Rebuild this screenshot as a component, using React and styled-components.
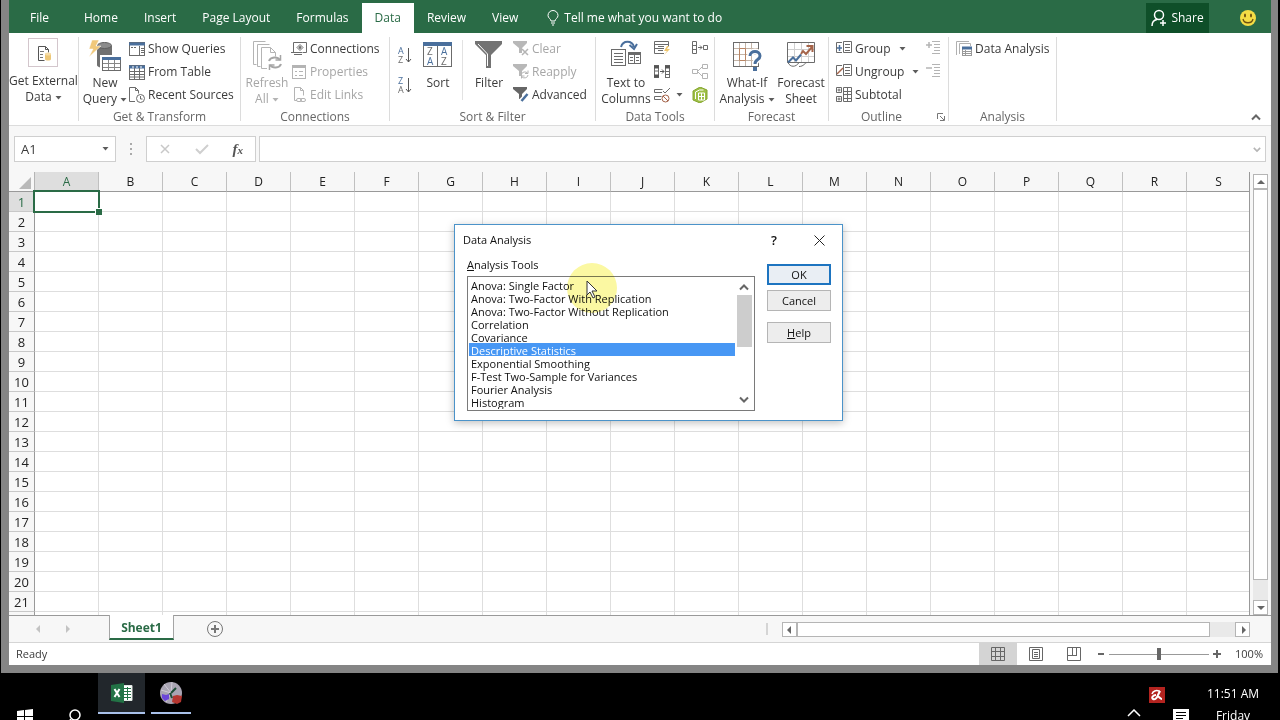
import React, { useState } from 'react';
import styled, { createGlobalStyle } from 'styled-components';

const COLUMNS = 'ABCDEFGHIJKLMNOPQRS'.split('')
const ROWS = Array.from({ length: 22 }, (_, i) => i + 1)
const TABS = ['Home', 'Insert', 'Page Layout', 'Formulas', 'Data', 'Review', 'View']
const TOOLS = [
    'Anova: Single Factor',
    'Anova: Two-Factor With Replication',
    'Anova: Two-Factor Without Replication',
    'Correlation',
    'Covariance',
    'Descriptive Statistics',
    'Exponential Smoothing',
    'F-Test Two-Sample for Variances',
    'Fourier Analysis',
    'Histogram',
]

const GRAY = '#6b6b6b'
const BLUE = '#4a6f9c'

// ICONS

function Icon({ w = 16, h = 16, children, dim }) {
    return (
        <svg width={w} height={h} viewBox={`0 0 ${w} ${h}`} fill="none" stroke={dim ? '#b4b4b4' : GRAY} aria-hidden="true">
            {children}
        </svg>
    )
}

const Caret = ({ color = '#5c5c5c' }) => <svg width="7" height="4" viewBox="0 0 7 4" aria-hidden="true"><path d="M0.5 0h6l-3 3.5z" fill={color} /></svg>

const ExternalIcon = () => (
    <Icon w={30} h={29}>
        <rect x="0.5" y="0.5" width="29" height="28" stroke="#d3c6cc" fill="#fff" />
        <path d="M16.5 22.5h-6v-14h7l3 3v3M17.5 8.5v3h3" stroke="#555" />
        <path d="M12 13.5h4M12 16.5h3M12 19.5h3" stroke="#777" />
        <path d="M17 16v5c0 2 6 2 6 0v-5z" fill="#edc778" stroke="none" />
        <ellipse cx="20" cy="16" rx="3" ry="1.5" fill="#f6dca5" stroke="none" />
    </Icon>
)

const NewQueryIcon = () => (
    <Icon w={34} h={34}>
        <path d="M9 6v19c0 4 15 4 15 0V6z" fill="#707070" stroke="none" />
        <ellipse cx="16.5" cy="5.5" rx="7" ry="3" fill="#8c8c8c" stroke="#5f5f5f" />
        <path d="M4 0h7L8 6h5L1 17l4-8H1z" fill="#f0c87a" stroke="#fff" strokeWidth="0.5" />
        <rect x="13.5" y="16.5" width="20" height="15" fill="#fff" stroke="#fff" strokeWidth="3" />
        <rect x="14.5" y="17.5" width="18" height="13" fill="#fff" stroke={GRAY} />
        <path d="M14 18.5h19" stroke={BLUE} strokeWidth="3" />
        <path d="M15 23.5h17M15 27.5h17M20.5 20v10M26.5 20v10" stroke="#888" />
    </Icon>
)

const ShowQueriesIcon = () => (
    <Icon>
        <rect x="0.5" y="1.5" width="15" height="13" />
        <path d="M0 3h16" stroke={BLUE} strokeWidth="3" />
        <path d="M10.5 5v9M2 6.5h2M5 6.5h2M12 7.5h3M12 9.5h3M12 11.5h3" />
    </Icon>
)

const FromTableIcon = () => (
    <Icon>
        <rect x="0.5" y="1.5" width="15" height="14" />
        <path d="M0 3h16" stroke={BLUE} strokeWidth="3" />
        <path d="M1 7.5h14M1 10.5h14M1 13h14M5.5 4v11M10.5 4v11" />
        <path d="M3 3h2M7 3h2M11 3h2" stroke="#fff" />
    </Icon>
)

const RecentIcon = () => (
    <Icon>
        <path d="M6 14.5H0.5v-14h6l3 3v3M6.5 0.5v3h3" />
        <circle cx="11.5" cy="11.5" r="4" />
        <path d="M11.5 9v3h2" />
    </Icon>
)

const RefreshIcon = () => (
    <Icon w={30} h={32} dim>
        <path d="M4.5 24.5H1.5V1.5h12M8.5 26.5H5.5V4.5h12" />
        <path d="M15 28.5H9.5V7.5h9l5 5v4M18.5 7.5v5h5" />
        <path d="M17 21a6 5 0 0 1 11-1M29 24a6 5 0 0 1-11 1" strokeWidth="2" stroke="#a5a5a5" />
        <path d="M28.5 15v5h-5M17.5 30v-5h5" strokeWidth="1.5" stroke="#a5a5a5" />
    </Icon>
)

const ConnectionsIcon = () => (
    <Icon>
        <path d="M2.5 11.5v-10h13v10h-4M0 11.5h7" />
        <path d="M9 3.5l3 3-3 3-3-3z" />
        <circle cx="9" cy="6.5" r="1" fill={GRAY} />
        <path d="M3 13.5h8M7 11.5h4" />
    </Icon>
)

const PropertiesIcon = () => (
    <Icon dim>
        <rect x="1.5" y="1.5" width="13" height="13" />
        <path d="M1 3h14" strokeWidth="2" />
        <path d="M4 7.5h2M4 11.5h2M8 7.5h4M8 11.5h4" />
    </Icon>
)

const EditLinksIcon = () => (
    <Icon dim>
        <path d="M6 13.5H3.5v-13h6l3 3v5M9.5 0.5v3h3" />
        <rect x="5.5" y="11.5" width="5" height="3" rx="1.5" />
        <rect x="9.5" y="11.5" width="5" height="3" rx="1.5" />
    </Icon>
)

const SortSmall = ({ a, b }) => (
    <svg width="16" height="18" viewBox="0 0 16 18" overflow="visible" fontFamily="Open Sans, sans-serif" fontSize="9" aria-hidden="true">
        <text x="2" y="8" fill={BLUE}>{a}</text>
        <text x="2" y="17" fill={GRAY}>{b}</text>
        <path d="M12.5 2v14M10 13l2.5 3 2.5-3" fill="none" stroke="#555" />
    </svg>
)

const SortIcon = () => (
    <svg width="30" height="28" viewBox="0 -2 30 28" overflow="visible" fontFamily="Open Sans, sans-serif" fontSize="10" aria-hidden="true">
        <rect x="0.5" y="0.5" width="28" height="24" fill="#fff" stroke={GRAY} />
        <path d="M0 2h29" stroke={BLUE} strokeWidth="4" />
        <path d="M14.5 4v21" stroke={GRAY} />
        <text x="4" y="13" fill={GRAY}>Z</text>
        <text x="4" y="23" fill={BLUE}>A</text>
        <text x="18" y="13" fill={BLUE}>A</text>
        <text x="18" y="23" fill={GRAY}>Z</text>
    </svg>
)

const FilterIcon = () => (
    <Icon w={28} h={30}>
        <path d="M0 1h27v3L16 15v13h-5V15L0 4z" fill="#737373" stroke="none" />
        <path d="M3 4l9.5 10v12" stroke="#fff" />
    </Icon>
)

const SmallFilter = ({ kind, dim }) => (
    <Icon dim={dim}>
        <path d="M0 0h14v2L9 7v5H6V7L0 2z" fill={dim ? '#b8b8b8' : '#666'} stroke="none" />
        {kind === 'clear' && <path d="M9 8l6 6M15 8l-6 6" strokeWidth="1.5" />}
        {kind === 'reapply' && <path d="M8.5 10a3.5 3 0 0 1 6-1M15 11a3.5 3 0 0 1-6 2M15 6.5v3h-3M8.5 14.5v-2.5h3" fill="none" />}
        {kind === 'advanced' && <path d="M8 14l7-7" stroke="#fff" strokeWidth="5" />}
        {kind === 'advanced' && <path d="M8.5 14l6-7" stroke={BLUE} strokeWidth="2.5" />}
    </Icon>
)

const TextToColumnsIcon = () => (
    <Icon w={32} h={28}>
        <rect x="1.5" y="9.5" width="14" height="16" />
        <path d="M4 13.5h9M4 16.5h9M4 19.5h9M4 22.5h9" />
        <rect x="18.5" y="12.5" width="12" height="11" />
        <path d="M18 13.5h13" strokeWidth="3" />
        <path d="M24.5 14v9M20 17.5h3M26 17.5h3M20 20.5h3M26 20.5h3" />
        <path d="M11 7c2-7 11-7 13 0M19.5 5l4.5 4 3-5" stroke={BLUE} strokeWidth="2" />
    </Icon>
)

const FlashFillIcon = () => (
    <Icon>
        <path d="M10 12.5H0.5v-12h14v5M1 3.5h13M1 7.5h9M5 3.5h8M4 5.5h6M4 9.5h5" />
        <path d="M13 5l-3 5h3l-3 4 6-6h-3l2-3z" fill="#efc66d" stroke="none" />
    </Icon>
)

const DuplicatesIcon = () => (
    <Icon>
        <rect x="0.5" y="1.5" width="4" height="12" fill="#fff" />
        <path d="M0 3h5M0 12h5" strokeWidth="3" stroke="#555" />
        <rect x="11.5" y="1.5" width="4" height="12" />
        <path d="M11 3h5" strokeWidth="3" stroke="#555" />
        <path d="M11 7.5h5M11 10.5h5M1 7h4" />
        <path d="M6 7.5h4M8 5.5l2 2-2 2" stroke="#555" />
    </Icon>
)

const ValidationIcon = () => (
    <Icon>
        <path d="M8 5.5H0.5v-3h8M7 12.5H0.5v-3h7M9 4l2 2 5-5" />
        <circle cx="11.5" cy="11.5" r="3.5" stroke="#a5644a" />
        <path d="M9 9l5 5" stroke="#a5644a" />
    </Icon>
)

const ConsolidateIcon = () => (
    <Icon>
        <path d="M0.5 0.5h4v12h-4zM1 4.5h4M1 8.5h4M11.5 4.5h4v4h-4zM6 6.5h4M8 4.5l2 2-2 2" />
    </Icon>
)

const RelationshipsIcon = () => (
    <Icon dim>
        <path d="M0.5 5.5h5v4h-5zM10.5 0.5h5v4h-5zM10.5 9.5h5v5h-5zM6 7l4-4M6 8l4 4" />
    </Icon>
)

const DataModelIcon = () => (
    <Icon>
        <path d="M8 0l7 3v9l-7 4-7-3V4z" fill="#9ebf45" stroke="#85a62f" />
        <path d="M3.5 5v7M3.5 5l4-2h4M6.5 6h6v7h-6zM7 9.5h5M9.5 6v7" stroke="#fff" />
    </Icon>
)

const WhatIfIcon = () => (
    <svg width="30" height="32" viewBox="0 0 30 32" fill="none" aria-hidden="true">
        <rect x="1.5" y="2.5" width="25" height="24" stroke={GRAY} />
        <path d="M2 8.5h24M2 14.5h24M2 20.5h24M7.5 3v23M13.5 3v23M19.5 3v23" stroke="#c3b3a6" />
        <path d="M7.5 8.5h6v12h-6z" stroke="#b98564" />
        <path d="M18 16c0-6 10-6 10 0 0 4-5 3-5 8" stroke="#fff" strokeWidth="6" />
        <path d="M18 16c0-6 10-6 10 0 0 4-5 3-5 8" stroke={BLUE} strokeWidth="3" />
        <path d="M21 27h4v4h-4z" fill={BLUE} />
    </svg>
)

const ForecastIcon = () => (
    <svg width="30" height="32" viewBox="0 0 30 32" fill="none" aria-hidden="true">
        <path d="M1.5 22.5v-20h27v20z" stroke={GRAY} />
        <path d="M2 9.5h26M2 16.5h26M8.5 3v19M15.5 3v19M22.5 3v19" stroke="#cfcfcf" />
        <path d="M2 22.5l5-5 3 3 5-6" stroke={BLUE} strokeWidth="2" />
        <path d="M15 14l2-3 3 3 6-7M20.5 6h6v6" stroke="#a5644a" strokeWidth="2" />
        <path d="M2 22.5c2 5 8 5 11 0M13 26.5c5 0 6-4 8-4" stroke={GRAY} />
    </svg>
)

const OutlineIcon = ({ kind }) => (
    <Icon>
        {kind === 'subtotal'
            ? <path d="M0.5 0.5h5v5h-5zM0.5 9.5h5v5h-5zM3 1.5v3M1.5 3h3M3 10.5v3M1.5 12h3M7.5 0.5h8v14h-8zM11.5 1v14M8 4.5h7M8 7.5h7M8 11.5h7" />
            : <path d="M7.5 0.5h8v11h-8zM9 3.5h5M9 6.5h5M9 9.5h5M6 1.5H0.5v10H6" />}
        {kind === 'group' && <path d="M3.5 4v6M1 7h5" stroke={BLUE} strokeWidth="1.5" />}
        {kind === 'ungroup' && <path d="M1 10l6-6" stroke="#a5644a" strokeWidth="1.5" />}
    </Icon>
)

const DetailIcon = ({ plus }) => (
    <Icon dim>
        <path d={plus ? 'M0 4h6M3 1v6' : 'M0 4h6'} strokeWidth="1.5" />
        <path d="M6 0.5h8M8 3.5h6M8 6.5h6M8 9.5h6M6 12.5h8" />
    </Icon>
)

const AnalysisIcon = () => (
    <Icon>
        <path d="M0.5 14V0.5H13M3.5 13V2.5H14.5V5" stroke="#b0b0b0" />
        <rect x="6.5" y="6.5" width="9" height="8" stroke="#999" />
        <path d="M6 7h10" stroke={BLUE} strokeWidth="3" />
        <path d="M7 10.5h8M7 12.5h8M9.5 9v6" stroke="#999" />
    </Icon>
)

const BulbIcon = () => (
    <svg width="12" height="16" viewBox="0 0 12 16" fill="none" stroke="#fff" aria-hidden="true">
        <path d="M4 11c0-2-3-3-3-5.5a5 5 0 0 1 10 0C11 8 8 9 8 11zM4 13h4M5 15h2" />
    </svg>
)

const PersonIcon = () => (
    <svg width="16" height="18" viewBox="0 0 16 18" fill="none" stroke="#fff" strokeWidth="1.5" aria-hidden="true">
        <circle cx="8" cy="6" r="4.5" />
        <path d="M1 17c0-4 2-6 5-6.5M9 14h6M12 11v6" />
    </svg>
)

const SmileIcon = () => (
    <svg width="18" height="18" viewBox="0 0 18 18" aria-hidden="true">
        <circle cx="9" cy="9" r="8" fill="#f4dd45" />
        <ellipse cx="6" cy="6.5" rx="1" ry="2" fill="#6e5210" />
        <ellipse cx="12" cy="6.5" rx="1" ry="2" fill="#6e5210" />
        <path d="M4 10c1 5 9 5 10 0" fill="none" stroke="#6e5210" strokeWidth="1.3" />
    </svg>
)

const Chevron = ({ up, color = '#666', w = 10 }) => (
    <svg width={w} height="7" viewBox="0 0 10 7" fill="none" stroke={color} strokeWidth="2" aria-hidden="true">
        <path d={up ? 'M1 5.5l4-4 4 4' : 'M1 1.5l4 4 4-4'} />
    </svg>
)

const Arrow = ({ dir, color = '#666' }) => {
    const d = { left: 'M6 1v8L2 5z', right: 'M4 1v8l4-4z', up: 'M1 7h8L5 3z', down: 'M1 3h8L5 7z' }[dir]
    return <svg width="10" height="10" viewBox="0 0 10 10" aria-hidden="true"><path d={d} fill={color} /></svg>
}

export default function App() {

    const [tool, setTool] = useState('Descriptive Statistics')
    const [zoom, setZoom] = useState(50)

    return (
        <>
            <GlobalStyle />
            <Desktop>
                <Window>
                    <TabBar>
                        <Tab $file>File</Tab>
                        {TABS.map((t) => <Tab key={t} $active={t === 'Data'}>{t}</Tab>)}
                        <TellMe><BulbIcon />Tell me what you want to do</TellMe>
                        <ShareButton><PersonIcon />Share</ShareButton>
                        <SmileButton aria-label="Feedback"><SmileIcon /></SmileButton>
                    </TabBar>

                    <Ribbon>
                        <Group $w={70}>
                            <GroupBody $center>
                                <BigButton><ExternalIcon /><span>Get External<br />Data <Caret /></span></BigButton>
                            </GroupBody>
                        </Group>
                        <Group $w={162}>
                            <GroupBody>
                                <BigButton $w={48}><NewQueryIcon /><span>New<br />Query <Caret /></span></BigButton>
                                <Stack>
                                    <SmallButton><ShowQueriesIcon />Show Queries</SmallButton>
                                    <SmallButton><FromTableIcon />From Table</SmallButton>
                                    <SmallButton><RecentIcon />Recent Sources</SmallButton>
                                </Stack>
                            </GroupBody>
                            <GroupName>Get &amp; Transform</GroupName>
                        </Group>
                        <Group $w={149}>
                            <GroupBody>
                                <BigButton $w={48} disabled><RefreshIcon /><span>Refresh<br />All <Caret color="#b4b4b4" /></span></BigButton>
                                <Stack>
                                    <SmallButton><ConnectionsIcon />Connections</SmallButton>
                                    <SmallButton disabled><PropertiesIcon />Properties</SmallButton>
                                    <SmallButton disabled><EditLinksIcon />Edit Links</SmallButton>
                                </Stack>
                            </GroupBody>
                            <GroupName>Connections</GroupName>
                        </Group>
                        <Group $w={206}>
                            <GroupBody>
                                <SortStack>
                                    <SortButton aria-label="Sort A to Z"><SortSmall a="A" b="Z" /></SortButton>
                                    <SortButton aria-label="Sort Z to A"><SortSmall a="Z" b="A" /></SortButton>
                                </SortStack>
                                <BigButton $w={44}><SortIcon /><span>Sort</span></BigButton>
                                <Divider />
                                <BigButton $w={48}><FilterIcon /><span>Filter</span></BigButton>
                                <Stack>
                                    <SmallButton disabled><SmallFilter kind="clear" dim />Clear</SmallButton>
                                    <SmallButton disabled><SmallFilter kind="reapply" dim />Reapply</SmallButton>
                                    <SmallButton><SmallFilter kind="advanced" />Advanced</SmallButton>
                                </Stack>
                            </GroupBody>
                            <GroupName>Sort &amp; Filter</GroupName>
                        </Group>
                        <Group $w={119}>
                            <GroupBody>
                                <BigButton $w={56}><TextToColumnsIcon /><span>Text to<br />Columns</span></BigButton>
                                <Stack>
                                    <SmallButton aria-label="Flash Fill"><FlashFillIcon /></SmallButton>
                                    <SmallButton aria-label="Remove Duplicates"><DuplicatesIcon /></SmallButton>
                                    <SmallButton $gap={6} aria-label="Data Validation"><ValidationIcon /><Caret /></SmallButton>
                                </Stack>
                                <Stack $push>
                                    <SmallButton aria-label="Consolidate"><ConsolidateIcon /></SmallButton>
                                    <SmallButton aria-label="Relationships" disabled><RelationshipsIcon /></SmallButton>
                                    <SmallButton aria-label="Manage Data Model"><DataModelIcon /></SmallButton>
                                </Stack>
                            </GroupBody>
                            <GroupName>Data Tools</GroupName>
                        </Group>
                        <Group $w={114}>
                            <GroupBody>
                                <BigButton $w={60}><WhatIfIcon /><span>What-If<br />Analysis <Caret /></span></BigButton>
                                <BigButton $w={48}><ForecastIcon /><span>Forecast<br />Sheet</span></BigButton>
                            </GroupBody>
                            <GroupName>Forecast</GroupName>
                        </Group>
                        <Group $w={120}>
                            <GroupBody>
                                <Stack $lead>
                                    <SmallButton><OutlineIcon kind="group" />Group <CaretSlot><Caret /></CaretSlot></SmallButton>
                                    <SmallButton><OutlineIcon kind="ungroup" />Ungroup <CaretSlot><Caret /></CaretSlot></SmallButton>
                                    <SmallButton><OutlineIcon kind="subtotal" />Subtotal</SmallButton>
                                </Stack>
                                <Stack $push>
                                    <SmallButton aria-label="Show Detail" disabled><DetailIcon plus /></SmallButton>
                                    <SmallButton aria-label="Hide Detail" disabled><DetailIcon /></SmallButton>
                                </Stack>
                            </GroupBody>
                            <GroupName $launcher>Outline</GroupName>
                            <Launcher aria-label="Outline settings">
                                <svg width="8" height="8" viewBox="0 0 8 8" fill="none" stroke="#777"><path d="M0.5 6V0.5H6M3 3l4 4M7.5 3v4.5H3" /></svg>
                            </Launcher>
                        </Group>
                        <Group $w={108}>
                            <GroupBody>
                                <Stack $lead><SmallButton><AnalysisIcon />Data Analysis</SmallButton></Stack>
                            </GroupBody>
                            <GroupName>Analysis</GroupName>
                        </Group>
                        <Collapse aria-label="Collapse the ribbon"><Chevron up /></Collapse>
                    </Ribbon>

                    <FormulaRow>
                        <NameBox>
                            <input aria-label="Name box" defaultValue="A1" />
                            <Caret />
                        </NameBox>
                        <Dots><i /><i /><i /></Dots>
                        <FormulaButtons>
                            <button aria-label="Cancel entry"><svg width="12" height="12" viewBox="0 0 12 12" stroke="#c8c8c8" strokeWidth="1.5"><path d="M2 2l8 8M10 2l-8 8" /></svg></button>
                            <button aria-label="Enter"><svg width="14" height="12" viewBox="0 0 14 12" fill="none" stroke="#cfcfcf" strokeWidth="2"><path d="M1 6l4 4 8-8" /></svg></button>
                            <button aria-label="Insert function"><Fx>f<small>x</small></Fx></button>
                        </FormulaButtons>
                        <FormulaBox>
                            <input aria-label="Formula bar" />
                            <Chevron color="#b5b5b5" w={8} />
                        </FormulaBox>
                    </FormulaRow>

                    <SheetArea>
                        <GridWrap>
                            <Grid>
                                <thead>
                                    <tr>
                                        <Corner><svg width="12" height="12" viewBox="0 0 12 12"><path d="M12 0v12H0z" fill="#b9b9b9" /></svg></Corner>
                                        {COLUMNS.map((c) => <ColHead key={c} $on={c === 'A'}>{c}</ColHead>)}
                                    </tr>
                                </thead>
                                <tbody>
                                    {ROWS.map((r) => (
                                        <tr key={r}>
                                            <RowHead $on={r === 1}>{r < 22 ? r : ''}</RowHead>
                                            {COLUMNS.map((c) => <Cell key={c} $selected={c === 'A' && r === 1} />)}
                                        </tr>
                                    ))}
                                </tbody>
                            </Grid>
                        </GridWrap>
                        <VScroll>
                            <ScrollButton aria-label="Scroll up"><Arrow dir="up" /></ScrollButton>
                            <VThumb />
                            <ScrollButton aria-label="Scroll down"><Arrow dir="down" /></ScrollButton>
                        </VScroll>
                    </SheetArea>

                    <SheetBar>
                        <SheetNav>
                            <button aria-label="Previous sheet"><Arrow dir="left" color="#c3c3c3" /></button>
                            <button aria-label="Next sheet"><Arrow dir="right" color="#c3c3c3" /></button>
                        </SheetNav>
                        <SheetTab>Sheet1</SheetTab>
                        <AddSheet aria-label="New sheet">
                            <svg width="16" height="16" viewBox="0 0 16 16" fill="none" stroke="#777"><circle cx="8" cy="8" r="7.5" /><path d="M4 8h8M8 4v8" strokeWidth="2" /></svg>
                        </AddSheet>
                        <Splitter />
                        <HScroll>
                            <ScrollButton aria-label="Scroll left"><Arrow dir="left" /></ScrollButton>
                            <HThumb />
                            <ScrollButton aria-label="Scroll right"><Arrow dir="right" /></ScrollButton>
                        </HScroll>
                    </SheetBar>

                    <StatusBar>
                        <Ready>Ready</Ready>
                        <ViewButton $on aria-label="Normal view">
                            <svg width="14" height="14" viewBox="0 0 14 14" fill="none" stroke="#666"><path d="M0.5 0.5h13v13H0.5zM0.5 4.5h13M0.5 9.5h13M4.5 0.5v13M9.5 0.5v13" /></svg>
                        </ViewButton>
                        <ViewButton aria-label="Page layout view">
                            <svg width="14" height="14" viewBox="0 0 14 14" fill="none" stroke="#666"><path d="M0.5 0.5h13v13H0.5zM3.5 2.5h7v9h-7zM5 5.5h4M5 7.5h4M5 9.5h4" /></svg>
                        </ViewButton>
                        <ViewButton aria-label="Page break view">
                            <svg width="14" height="14" viewBox="0 0 14 14" fill="none" stroke="#666"><path d="M0.5 0.5h13v13H0.5zM5.5 1v7M9.5 1v7M1 8.5h9" /></svg>
                        </ViewButton>
                        <ZoomStep aria-label="Zoom out"><svg width="8" height="8" viewBox="0 0 8 8" stroke="#666" strokeWidth="2"><path d="M1 4h6" /></svg></ZoomStep>
                        <ZoomRange type="range" aria-label="Zoom" value={zoom} onChange={(e) => setZoom(Number(e.target.value))} />
                        <ZoomStep aria-label="Zoom in"><svg width="8" height="8" viewBox="0 0 8 8" stroke="#666" strokeWidth="2"><path d="M0 4h8M4 0v8" /></svg></ZoomStep>
                        <ZoomValue>100%</ZoomValue>
                    </StatusBar>

                    <Dialog role="dialog" aria-label="Data Analysis">
                        <DialogHead>
                            <span>Data Analysis</span>
                            <HeadButton>?</HeadButton>
                            <HeadButton aria-label="Close"><svg width="11" height="11" viewBox="0 0 11 11" stroke="#222"><path d="M0.5 0.5l10 10M10.5 0.5l-10 10" /></svg></HeadButton>
                        </DialogHead>
                        <DialogBody>
                            <Field>
                                <label htmlFor="tools"><u>A</u>nalysis Tools</label>
                                <ListFrame>
                                    <ToolList id="tools" size={10} value={tool} onChange={(e) => setTool(e.target.value)}>
                                        {TOOLS.map((t) => <option key={t}>{t}</option>)}
                                    </ToolList>
                                    <ListScroll>
                                        <Chevron up />
                                        <ListThumb />
                                        <Chevron />
                                    </ListScroll>
                                </ListFrame>
                            </Field>
                            <Actions>
                                <DialogButton $primary>OK</DialogButton>
                                <DialogButton>Cancel</DialogButton>
                                <DialogButton $apart><u>H</u>elp</DialogButton>
                            </Actions>
                        </DialogBody>
                    </Dialog>

                    <Highlight />
                    <Pointer width="12" height="20" viewBox="0 0 12 20">
                        <path d="M1 1v14l3-3 3 6 2-1-3-6h5z" fill="#fff" stroke="#333" />
                    </Pointer>
                </Window>

                <Taskbar>
                    <StartButton aria-label="Start">
                        <svg width="16" height="16" viewBox="0 0 16 16" fill="#fff"><path d="M0 2l7-1v6H0zM8 1l8-1v7H8zM0 8h7v7l-7-1zM8 8h8v8l-8-1z" /></svg>
                    </StartButton>
                    <StartButton aria-label="Search">
                        <svg width="16" height="16" viewBox="0 0 16 16" fill="none" stroke="#fff" strokeWidth="1.5"><circle cx="9" cy="6" r="5" /><path d="M5 10l-4 5" /></svg>
                    </StartButton>
                    <TaskTile $active aria-label="Excel">
                        <svg width="22" height="20" viewBox="0 0 22 20">
                            <path d="M12 2.5h9v15h-9" fill="#fff" stroke="#dfe8e2" />
                            <path d="M13 5.5h7M13 8.5h7M13 11.5h7M13 14.5h7M16.5 4v13" stroke="#237346" />
                            <path d="M0 2l13-2v20L0 18z" fill="#237346" />
                            <path d="M3.5 6l5 8M8.5 6l-5 8" stroke="#fff" strokeWidth="2" />
                        </svg>
                    </TaskTile>
                    <TaskTile aria-label="Recorder">
                        <svg width="24" height="24" viewBox="0 0 24 24">
                            <circle cx="12" cy="12" r="11" fill="#a9a4b2" />
                            <path d="M12 12L5 3M12 12l1-11M12 12L2 9M12 12l-5 9" stroke="#cfcad6" strokeWidth="1" />
                            <path d="M3 13l4 1 3-1v5l-4 2-3-3z" fill="#6b46d8" />
                            <path d="M14 15l4-1 5 1-1 6-4 2-5-2z" fill="#b5362f" />
                            <path d="M12 12l5-5M11 12l2 5" stroke="#1d4d35" strokeWidth="2" />
                        </svg>
                    </TaskTile>
                    <Tray>
                        <TrayButton $low aria-label="Hidden icons"><svg width="14" height="8" viewBox="0 0 14 8" fill="none" stroke="#fff" strokeWidth="1.5"><path d="M1 7l6-6 6 6" /></svg></TrayButton>
                        <TrayButton aria-label="Antivirus">
                            <svg width="16" height="16" viewBox="0 0 16 16">
                                <path d="M0 0h16v16H0z" fill="#b3231f" />
                                <path d="M3 7c1-3 4-4 7-3l1 1" fill="none" stroke="#fff" strokeWidth="1.5" />
                                <path d="M11 4L9 8c-1 3-3 5-5 4s0-4 3-4M8 9c2 0 3 3 5 3" fill="none" stroke="#fff" strokeWidth="2" />
                            </svg>
                        </TrayButton>
                        <TrayButton $low aria-label="Notifications">
                            <svg width="16" height="16" viewBox="0 0 16 16"><path d="M0 0h16v12H8l-4 4v-4H0z" fill="#fff" /><path d="M3 3.5h10M3 6.5h10M3 9.5h7" stroke="#000" /></svg>
                        </TrayButton>
                        <Clock>11:51 AM<br />Friday</Clock>
                    </Tray>
                </Taskbar>
            </Desktop>
        </>
    )
}

const GlobalStyle = createGlobalStyle`
    * {
        box-sizing: border-box;
    }

    body {
        margin: 0;
        background: #000;
        color: #3b3b3b;
        font-family: 'Open Sans', 'Noto Sans', sans-serif;
        font-size: 12px;
        line-height: 16px;
        overflow: hidden;
    }

    button, input, select {
        margin: 0;
        padding: 0;
        border: 0;
        background: none;
        color: inherit;
        font: inherit;
    }

    svg {
        flex: none;
    }
`

const Desktop = styled.div`
    display: flex;
    flex-direction: column;
    height: 100vh;
`

const Window = styled.main`
    position: relative;
    flex: 1;
    min-height: 0;
    display: flex;
    flex-direction: column;
    margin: 0 2px 0 1px;
    padding: 0 7px 8px 8px;
    background: #858585;
`

// TOP TABS

const TabBar = styled.nav`
    display: flex;
    align-items: flex-end;
    height: 33px;
    padding-left: 8px;
    background: #2a6b46;
    color: #fff;
`

const Tab = styled.button`
    height: 30px;
    padding: 0 13px;
    margin-right: ${props => props.$file ? '9px' : '0'};
    background: ${props => props.$active ? '#fff' : 'transparent'};
    color: ${props => props.$active ? '#2a6b46' : '#fff'};
    white-space: nowrap;
`

const TellMe = styled.button`
    display: flex;
    align-items: center;
    gap: 5px;
    height: 30px;
    margin-left: 16px;
    white-space: nowrap;
`

const ShareButton = styled.button`
    display: flex;
    align-items: center;
    justify-content: center;
    gap: 4px;
    width: 63px;
    height: 30px;
    margin-left: auto;
    background: #0f4f29;
`

const SmileButton = styled.button`
    display: flex;
    align-items: center;
    justify-content: center;
    height: 30px;
    margin: 0 14px 0 30px;
`

// RIBBON

const Ribbon = styled.section`
    display: flex;
    height: 93px;
    padding: 4px 0 0;
    background: #fff;
    border-bottom: 1px solid #dcdcdc;
`

const Group = styled.div`
    position: relative;
    flex: none;
    display: flex;
    flex-direction: column;
    width: ${props => props.$w}px;
    margin-bottom: 4px;
    border-right: 1px solid #dcdcdc;
`

const GroupBody = styled.div`
    flex: none;
    display: flex;
    justify-content: ${props => props.$center ? 'center' : 'flex-start'};
    height: 72px;
    padding-left: ${props => props.$center ? '0' : '2px'};
`

const GroupName = styled.div`
    padding-right: ${props => props.$launcher ? '14px' : '0'};
    text-align: center;
    color: #666;
`

const BigButton = styled.button`
    display: flex;
    flex-direction: column;
    align-items: center;
    justify-content: space-between;
    width: ${props => props.$w ? props.$w + 'px' : 'auto'};
    height: ${props => props.$w ? '70px' : '68px'};
    padding-top: ${props => props.$w ? '3px' : '1px'};
    color: ${props => props.disabled ? '#a6a6a6' : '#3b3b3b'};
    white-space: nowrap;

    span {
        height: 32px;
    }

    span svg {
        vertical-align: middle;
    }
`

const Stack = styled.div`
    display: flex;
    flex-direction: column;
    height: 69px;
    padding-left: ${props => props.$lead ? '5px' : '0'};
    margin-left: ${props => props.$push ? 'auto' : '0'};
    margin-right: ${props => props.$push ? '6px' : '0'};
`

const SmallButton = styled.button`
    display: flex;
    align-items: center;
    gap: ${props => props.$gap || 3}px;
    height: 23px;
    color: ${props => props.disabled ? '#a6a6a6' : '#3b3b3b'};
    white-space: nowrap;
`

const SortStack = styled.div`
    display: flex;
    flex-direction: column;
    gap: 12px;
    width: 24px;
    padding-top: 9px;
`

const SortButton = styled.button`
    display: flex;
    justify-content: center;
    align-items: center;
`

const CaretSlot = styled.span`
    display: flex;
    padding-left: 5px;
`

const Divider = styled.div`
    width: 1px;
    height: 60px;
    margin: 3px 2px 0;
    background: #e2e2e2;
`

const Launcher = styled.button`
    position: absolute;
    right: 3px;
    bottom: 0;
    display: flex;
`

const Collapse = styled.button`
    align-self: flex-end;
    display: flex;
    margin: 0 10px 4px auto;
`

// FORMULA BAR

const FormulaRow = styled.section`
    display: flex;
    height: 46px;
    padding: 10px 5px 10px;
    background: #f7f7f7;
`

const NameBox = styled.div`
    display: flex;
    align-items: center;
    width: 102px;
    padding: 0 6px;
    background: #fff;
    border: 1px solid #cfcfcf;

    input {
        flex: 1;
        min-width: 0;
        font-size: 13px;
    }
`

const Dots = styled.div`
    display: flex;
    flex-direction: column;
    align-items: center;
    justify-content: center;
    gap: 3px;
    width: 30px;

    i {
        width: 2px;
        height: 2px;
        background: #aaa;
    }
`

const FormulaButtons = styled.div`
    display: flex;
    align-items: center;
    justify-content: space-around;
    width: 110px;
    margin-right: 3px;
    background: #fff;
    border: 1px solid #cfcfcf;

    button {
        display: flex;
    }
`

const Fx = styled.span`
    color: #555;
    font-family: 'Liberation Serif', serif;
    font-style: italic;
    font-weight: 700;
    font-size: 15px;

    small {
        font-size: 11px;
    }
`

const FormulaBox = styled.div`
    flex: 1;
    display: flex;
    align-items: center;
    padding: 0 4px;
    background: #fff;
    border: 1px solid #cfcfcf;

    input {
        flex: 1;
        min-width: 0;
    }
`

// SHEET

const SheetArea = styled.section`
    flex: 1;
    min-height: 0;
    display: flex;
    background: #f7f7f7;
`

const GridWrap = styled.div`
    flex: 1;
    min-width: 0;
    overflow: hidden;
    border-right: 1px solid #999;
`

const Grid = styled.table`
    table-layout: fixed;
    width: 1242px;
    border-collapse: separate;
    border-spacing: 0;

    th, td {
        height: 20px;
        padding: 0;
        line-height: 18px;
    }
`

const Corner = styled.td`
    width: 26px;
    border-right: 1px solid #b5b5b5;
    border-bottom: 1px solid #999;
    text-align: right;

    svg {
        display: block;
        margin: 3px 3px 0 auto;
    }
`

const ColHead = styled.th`
    width: 64px;
    background: ${props => props.$on ? '#dedede' : '#f7f7f7'};
    border-right: 1px solid #c0c0c0;
    border-bottom: 1px solid #999;
    color: ${props => props.$on ? '#2a6b46' : '#222'};
    font-weight: 400;
`

const RowHead = styled.th`
    background: ${props => props.$on ? '#dedede' : '#f7f7f7'};
    border-right: 1px solid #999;
    border-bottom: 1px solid #c8c8c8;
    color: ${props => props.$on ? '#2a6b46' : '#222'};
    font-size: 13px;
    font-weight: 400;
`

const Cell = styled.td`
    position: relative;
    background: #fff;
    border-right: 1px solid #dedede;
    border-bottom: 1px solid #dedede;

    ${props => props.$selected && `
        &::before {
            content: '';
            position: absolute;
            inset: -2px -2px -2px -2px;
            border: 2px solid #2a6b46;
            z-index: 1;
        }

        &::after {
            content: '';
            position: absolute;
            right: -4px;
            bottom: -4px;
            width: 6px;
            height: 6px;
            background: #2a6b46;
            border-left: 1px solid #fff;
            border-top: 1px solid #fff;
            z-index: 2;
        }
    `}
`

const VScroll = styled.div`
    display: flex;
    flex-direction: column;
    width: 15px;
    margin: 2px 3px 0 3px;
    background: #e9e9e9;
`

const VThumb = styled.div`
    flex: 1;
    margin-bottom: 20px;
    background: #fff;
    border: 1px solid #b5b5b5;
`

const ScrollButton = styled.button`
    flex: none;
    display: flex;
    align-items: center;
    justify-content: center;
    width: 15px;
    height: 15px;
    background: #fff;
    border: 1px solid #b5b5b5;
`

const SheetBar = styled.section`
    display: flex;
    height: 28px;
    background: #f7f7f7;
    border-top: 1px solid #999;
    border-bottom: 1px solid #d5d5d5;
`

const SheetNav = styled.div`
    display: flex;
    align-items: center;
    justify-content: center;
    gap: 18px;
    width: 100px;
    padding-right: 12px;

    button {
        display: flex;
    }
`

const SheetTab = styled.button`
    width: 65px;
    height: 25px;
    margin-top: -1px;
    padding-top: 3px;
    background: #fff;
    border: 1px solid #a5a5a5;
    border-top: 0;
    border-bottom: 2px solid #2a6b46;
    color: #2a6b46;
    font-weight: 700;
`

const AddSheet = styled.button`
    display: flex;
    align-items: center;
    margin-left: 33px;
`

const Splitter = styled.div`
    width: 2px;
    height: 12px;
    margin: 7px 14px 0 auto;
    background: #d5d5d5;
`

const HScroll = styled.div`
    display: flex;
    width: 468px;
    height: 15px;
    margin: 6px 21px 0 0;
    background: #e9e9e9;
`

const HThumb = styled.div`
    flex: 1;
    margin-right: 25px;
    background: #fff;
    border: 1px solid #b5b5b5;
`

const StatusBar = styled.footer`
    display: flex;
    align-items: center;
    height: 22px;
    padding: 0 8px 0 7px;
    background: #fff;
`

const Ready = styled.span`
    margin-right: auto;
    font-size: 11px;
`

const ViewButton = styled.button`
    display: flex;
    align-items: center;
    justify-content: center;
    width: 38px;
    height: 22px;
    background: ${props => props.$on ? '#d4d4d4' : 'transparent'};
`

const ZoomStep = styled.button`
    display: flex;
    margin: 0 4px;
`

const ZoomRange = styled.input`
    appearance: none;
    width: 100px;
    height: 14px;
    background: linear-gradient(#999, #999) center / 100% 1px no-repeat;

    &::-webkit-slider-thumb {
        appearance: none;
        width: 4px;
        height: 12px;
        background: #666;
    }
`

const ZoomValue = styled.span`
    width: 32px;
    margin-left: 6px;
    font-size: 11px;
    text-align: right;
`

// DIALOG

const Dialog = styled.div`
    position: absolute;
    left: 453px;
    top: 224px;
    width: 389px;
    padding: 0 11px 9px 12px;
    background: #fff;
    border: 1px solid #4b93c9;
    box-shadow: 0 2px 8px rgba(0, 0, 0, 0.25);
    color: #111;
    font-size: 11px;
    line-height: 14px;
    z-index: 3;
`

const DialogHead = styled.div`
    display: flex;
    align-items: center;
    height: 30px;
    margin-left: -4px;

    span {
        flex: 1;
    }
`

const HeadButton = styled.button`
    display: flex;
    align-items: center;
    justify-content: center;
    width: 24px;
    height: 20px;
    margin-left: 21px;
    font-size: 13px;
    font-weight: 600;
`

const DialogBody = styled.div`
    display: flex;
    gap: 12px;
`

const Field = styled.div`
    flex: 1;
    padding-top: 3px;

    label {
        display: block;
        margin-bottom: 4px;
    }
`

const ListFrame = styled.div`
    display: flex;
    height: 135px;
    padding: 1px;
    border: 1px solid #7a7a7a;
`

const ToolList = styled.select`
    flex: 1;
    height: 131px;
    outline: 0;
    overflow: hidden;
    scrollbar-width: none;

    option {
        height: 13px;
        min-height: 13px;
        padding: 0 2px;
        line-height: 13px;
    }

    option:checked {
        background: #4797f4 linear-gradient(#4797f4, #4797f4);
        color: #fff;
    }
`

const ListScroll = styled.div`
    display: flex;
    flex-direction: column;
    align-items: center;
    width: 18px;
    padding: 6px 1px;
    gap: 4px;
    background: #fff;

    svg:last-child {
        margin-top: auto;
    }
`

const ListThumb = styled.div`
    width: 15px;
    height: 52px;
    background: #cdcdcd;
`

const Actions = styled.div`
    display: flex;
    flex-direction: column;
    gap: 5px;
    width: 64px;
    padding-top: 9px;
`

const DialogButton = styled.button`
    height: 21px;
    margin-top: ${props => props.$apart ? '6px' : '0'};
    background: ${props => props.$primary ? '#e9eef4' : '#ededed'};
    border: ${props => props.$primary ? '2px solid #1d74c0' : '1px solid #b5b5b5'};
`

const Highlight = styled.div`
    position: absolute;
    left: 566px;
    top: 263px;
    width: 50px;
    height: 50px;
    border-radius: 50%;
    background: #fbf8a2;
    mix-blend-mode: multiply;
    pointer-events: none;
    z-index: 4;
`

const Pointer = styled.svg`
    position: absolute;
    left: 585px;
    top: 280px;
    z-index: 5;
`

// TASKBAR

const Taskbar = styled.footer`
    display: flex;
    align-items: flex-start;
    height: 47px;
    overflow: hidden;
    background: #000;
    color: #fff;
`

const StartButton = styled.button`
    display: flex;
    justify-content: center;
    width: 49px;
    padding-top: 36px;
`

const TaskTile = styled.button`
    display: flex;
    align-items: center;
    justify-content: center;
    width: ${props => props.$active ? '47px' : '40px'};
    height: 41px;
    margin-right: 6px;
    background: ${props => props.$active ? '#22272c' : 'transparent'};
    border-bottom: 2px solid #a9c1ea;
`

const Tray = styled.div`
    display: flex;
    margin-left: auto;
    padding-right: 18px;
`

const TrayButton = styled.button`
    display: flex;
    align-items: flex-start;
    margin-right: 8px;
    padding-top: ${props => props.$low ? '36px' : '14px'};
`

const Clock = styled.div`
    width: 58px;
    margin-left: 7px;
    padding-top: 10px;
    line-height: 22px;
    text-align: center;
    white-space: nowrap;
`
